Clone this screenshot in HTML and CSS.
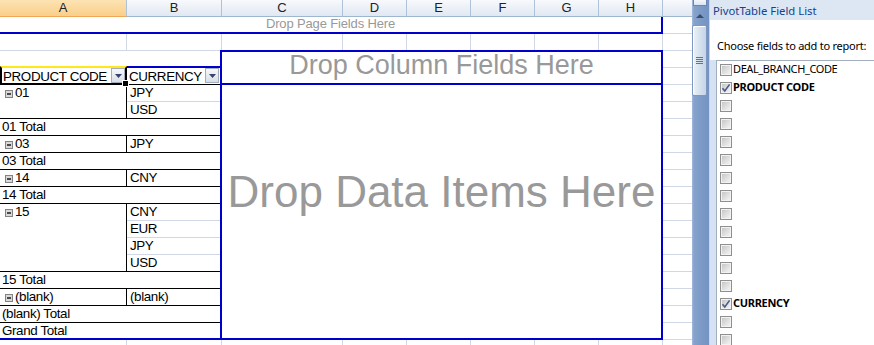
FILE: index.html
```html
<!DOCTYPE html>
<html>
<head>
<meta charset="utf-8">
<title>PivotTable</title>
<link rel="stylesheet" href="styles.css">
</head>
<body>
<div class="app">
  <div class="sheet">
    <div class="ch sel">A</div>
    <div class="ch">B</div>
    <div class="ch">C</div>
    <div class="ch">D</div>
    <div class="ch">E</div>
    <div class="ch">F</div>
    <div class="ch">G</div>
    <div class="ch">H</div>
    <div class="ch last"></div>

    <div class="pagefield">Drop Page Fields Here</div>
    <div class="blank3"></div>

    <div class="rh rh-a r5">
      <span class="rh-text">PRODUCT CODE</span>
      <span class="dd"><svg width="7" height="4" viewBox="0 0 7 4"><path d="M0 0H7L3.5 4Z" fill="#34446a"/></svg></span>
      <span class="handle"></span>
    </div>
    <div class="rh rh-b r5">
      <span class="rh-text">CURRENCY</span>
      <span class="dd"><svg width="7" height="4" viewBox="0 0 7 4"><path d="M0 0H7L3.5 4Z" fill="#34446a"/></svg></span>
    </div>

    <div class="grp r6-7"><span class="mi"></span><span>01</span></div>
    <div class="cur r6">JPY</div>
    <div class="cur end r7">USD</div>
    <div class="tot r8">01 Total</div>

    <div class="grp r9"><span class="mi"></span><span>03</span></div>
    <div class="cur end r9">JPY</div>
    <div class="tot r10">03 Total</div>

    <div class="grp r11"><span class="mi"></span><span>14</span></div>
    <div class="cur end r11">CNY</div>
    <div class="tot r12">14 Total</div>

    <div class="grp r13-16"><span class="mi"></span><span>15</span></div>
    <div class="cur r13">CNY</div>
    <div class="cur r14">EUR</div>
    <div class="cur r15">JPY</div>
    <div class="cur end r16">USD</div>
    <div class="tot r17">15 Total</div>

    <div class="grp r18"><span class="mi"></span><span>(blank)</span></div>
    <div class="cur end r18">(blank)</div>
    <div class="tot r19">(blank) Total</div>
    <div class="tot grand r20">Grand Total</div>

    <div class="colarea">Drop Column Fields Here</div>
    <div class="dataarea">Drop Data Items Here</div>
  </div>

  <div class="vscroll">
    <div class="split"></div>
    <div class="arrow"></div>
    <div class="thumb"><div class="grip"></div></div>
  </div>

  <div class="panel">
    <div class="ptitle">PivotTable Field List</div>
    <div class="choose">Choose fields to add to report:</div>
    <div class="listwrap">
      <div class="strip"></div>
      <div class="list">
        <div class="item"><span class="cb"></span><span class="lbl">DEAL_BRANCH_CODE</span></div>
        <div class="item"><span class="cb"><svg width="10" height="10" viewBox="0 0 10 10"><path d="M1.5 5.2L3.8 8L8.6 1.4" fill="none" stroke="#48598a" stroke-width="1.6"/></svg></span><span class="lbl b">PRODUCT CODE</span></div>
        <div class="item"><span class="cb"></span><span class="lbl"></span></div>
        <div class="item"><span class="cb"></span><span class="lbl"></span></div>
        <div class="item"><span class="cb"></span><span class="lbl"></span></div>
        <div class="item"><span class="cb"></span><span class="lbl"></span></div>
        <div class="item"><span class="cb"></span><span class="lbl"></span></div>
        <div class="item"><span class="cb"></span><span class="lbl"></span></div>
        <div class="item"><span class="cb"></span><span class="lbl"></span></div>
        <div class="item"><span class="cb"></span><span class="lbl"></span></div>
        <div class="item"><span class="cb"></span><span class="lbl"></span></div>
        <div class="item"><span class="cb"></span><span class="lbl"></span></div>
        <div class="item"><span class="cb"></span><span class="lbl"></span></div>
        <div class="item"><span class="cb"><svg width="10" height="10" viewBox="0 0 10 10"><path d="M1.5 5.2L3.8 8L8.6 1.4" fill="none" stroke="#48598a" stroke-width="1.6"/></svg></span><span class="lbl b">CURRENCY</span></div>
        <div class="item"><span class="cb"></span><span class="lbl"></span></div>
        <div class="item"><span class="cb"></span><span class="lbl"></span></div>
      </div>
    </div>
  </div>
</div>
</body>
</html>
```

FILE: styles.css
```css
* { box-sizing: border-box; }
html, body { margin: 0; padding: 0; }
body {
  width: 874px;
  height: 345px;
  overflow: hidden;
  background: #fff;
  font-family: "Liberation Sans", Arial, sans-serif;
}
.app {
  display: flex;
  width: 874px;
  height: 345px;
  overflow: hidden;
}

/* ---------- sheet ---------- */
.sheet {
  flex: none;
  width: 692px;
  height: 345px;
  display: grid;
  grid-template-columns: 127px 95px 121px 64px 64px 64px 64px 64px 29px;
  grid-template-rows: repeat(20, 17px) 5px;
  background-color: #fff;
  background-image:
    repeating-linear-gradient(to bottom, transparent 0 16px, #d0d7e5 16px 17px),
    linear-gradient(to right,
      transparent 0 126px, #d0d7e5 126px 127px,
      transparent 127px 221px, #d0d7e5 221px 222px,
      transparent 222px 342px, #d0d7e5 342px 343px,
      transparent 343px 406px, #d0d7e5 406px 407px,
      transparent 407px 470px, #d0d7e5 470px 471px,
      transparent 471px 534px, #d0d7e5 534px 535px,
      transparent 535px 598px, #d0d7e5 598px 599px,
      transparent 599px 662px, #d0d7e5 662px 663px,
      transparent 663px);
  font-size: 13.4px;
  line-height: 16px;
  letter-spacing: -0.38px;
  color: #000;
}

.ch {
  background: linear-gradient(to bottom, #f7f9fc, #e1e8f2);
  border-right: 1px solid #b0c2d8;
  border-bottom: 1px solid #9eb6ce;
  text-align: center;
  font-size: 13px;
  letter-spacing: 0;
  line-height: 16px;
  color: #222;
}
.ch.sel {
  background: linear-gradient(to bottom, #fde3b3, #f9cf89);
  border-bottom-color: #f0a755;
}
.ch.last { border-right: 0; }

.pagefield {
  grid-row: 2;
  grid-column: 1 / 9;
  background: #fff;
  border-right: 2px solid #0000cc;
  border-bottom: 2px solid #0000cc;
  text-align: center;
  color: #999;
  font-size: 13px;
  letter-spacing: -0.15px;
  line-height: 14px;
}
.blank3 {
  grid-row: 4;
  grid-column: 1 / 3;
  background: #fff;
}

.r5 { grid-row: 5; }
.r6 { grid-row: 6; }
.r7 { grid-row: 7; }
.r8 { grid-row: 8; }
.r9 { grid-row: 9; }
.r10 { grid-row: 10; }
.r11 { grid-row: 11; }
.r12 { grid-row: 12; }
.r13 { grid-row: 13; }
.r14 { grid-row: 14; }
.r15 { grid-row: 15; }
.r16 { grid-row: 16; }
.r17 { grid-row: 17; }
.r18 { grid-row: 18; }
.r19 { grid-row: 19; }
.r20 { grid-row: 20; }
.r6-7 { grid-row: 6 / 8; }
.r13-16 { grid-row: 13 / 17; }

.rh {
  display: flex;
  align-items: flex-start;
  margin-top: -2px;
  background: #fff;
}
.rh-text { padding-top: 1px; white-space: nowrap; }
.rh-a {
  grid-column: 1;
  position: relative;
  border-top: 2px solid #ffe81a;
  border-left: 2px solid #000;
  border-right: 2px solid #000;
  border-bottom: 2px solid #000;
  padding-left: 1px;
}
.rh-b {
  grid-column: 2;
  border-top: 2px solid #0000cc;
  border-bottom: 1px solid #000;
  padding: 0 3px 0 2px;
}
.dd {
  flex: none;
  margin-left: auto;
  width: 14px;
  height: 15px;
  border: 1px solid #a3adbd;
  background: linear-gradient(to bottom, #f6f7f9, #d9dfe8);
  display: flex;
  align-items: center;
  justify-content: center;
}
.dd svg { display: block; margin-top: 1px; }
.handle {
  position: absolute;
  right: -4px;
  bottom: -4px;
  width: 7px;
  height: 7px;
  background: #000;
  border: 1px solid #fff;
  z-index: 3;
}

.grp {
  grid-column: 1;
  background: #fff;
  border-right: 1px solid #000;
  border-bottom: 1px solid #000;
  display: flex;
  align-items: flex-start;
  padding-left: 5px;
  white-space: nowrap;
}
.mi {
  flex: none;
  position: relative;
  width: 8px;
  height: 8px;
  margin: 5px 2px 0 0;
  border: 1px solid #838383;
  background: #d9d9d9;
}
.mi::after {
  content: "";
  position: absolute;
  left: 1px;
  right: 1px;
  top: 2px;
  height: 2px;
  background: #4a4a4a;
}
.cur {
  grid-column: 2;
  padding-left: 3px;
}
.cur.end { border-bottom: 1px solid #000; }
.tot {
  grid-column: 1 / 3;
  background: #fff;
  border-bottom: 1px solid #000;
  padding-left: 2px;
  white-space: nowrap;
}
.tot.grand { border-bottom: 2px solid #0000cc; }

.colarea {
  grid-row: 4 / 6;
  grid-column: 3 / 9;
  margin: -1px 0 0 -2px;
  border: 2px solid #0000cc;
  background: #fff;
  text-align: center;
  color: #999;
  font-size: 27px;
  letter-spacing: 0;
  line-height: 26px;
  white-space: nowrap;
}
.dataarea {
  grid-row: 6 / 21;
  grid-column: 3 / 9;
  margin-left: -2px;
  border: 2px solid #0000cc;
  border-top: 0;
  background: #fff;
  padding-top: 83px;
  text-align: center;
  color: #999;
  font-size: 44px;
  letter-spacing: 0;
  line-height: 48px;
  white-space: nowrap;
}

/* ---------- scrollbar ---------- */
.vscroll {
  flex: none;
  width: 17px;
  height: 345px;
  background: linear-gradient(to right, #a4badb 0, #86a2cc 2px, #7b99c6 60%, #7593c2 100%);
  display: flex;
  flex-direction: column;
  align-items: flex-start;
}
.split {
  width: 14px;
  height: 6px;
  margin-left: 1px;
  border: 1px solid #6c86b0;
  border-top: 0;
  background: linear-gradient(to bottom, #f3f6fb, #dbe4f1);
}
.arrow {
  margin: 8px 0 0 4px;
  width: 0;
  height: 0;
  border-left: 4px solid transparent;
  border-right: 4px solid transparent;
  border-bottom: 4px solid #3b4e70;
}
.thumb {
  margin-top: 7px;
  width: 15px;
  height: 71px;
  border: 1px solid #7d98c2;
  border-radius: 2px;
  background: linear-gradient(to right, #eef2f8, #d9e3f0 45%, #c5d4e8);
  box-shadow: inset 1px 1px 0 #fff;
  display: flex;
  align-items: center;
  justify-content: center;
}
.grip {
  width: 7px;
  height: 7px;
  background: repeating-linear-gradient(to bottom, #5f7396 0 1px, transparent 1px 2px);
}

/* ---------- panel ---------- */
.panel {
  flex: 1;
  min-width: 0;
  height: 345px;
  display: flex;
  flex-direction: column;
  background: #fff;
  border-left: 1px solid #c6d6ec;
  font-family: "Noto Sans", "Open Sans", sans-serif;
  font-size: 11px;
  color: #000;
}
.ptitle {
  flex: none;
  height: 20px;
  background: #dde7f4;
  color: #15428b;
  padding: 1px 0 0 3px;
  font-size: 11.3px;
  line-height: 19px;
  white-space: nowrap;
}
.choose {
  flex: none;
  margin-top: 18px;
  padding-left: 7px;
  line-height: 15px;
  letter-spacing: -0.25px;
  white-space: nowrap;
}
.listwrap {
  flex: 1;
  display: flex;
  margin-top: 7px;
  min-height: 0;
}
.strip {
  flex: none;
  width: 6px;
  background: #d4e2f4;
}
.list {
  flex: 1;
  border-left: 1px solid #a3afbf;
  border-top: 1px solid #a3afbf;
  background: #fff;
  overflow: hidden;
}
.item {
  height: 18px;
  display: flex;
  align-items: flex-start;
  padding-left: 3px;
  white-space: nowrap;
}
.cb {
  flex: none;
  width: 12px;
  height: 12px;
  margin: 3px 1px 0 0;
  border: 1px solid #8e8f8f;
  background: linear-gradient(135deg, #c2c2c2 0%, #e8e8e8 70%, #f8f8f8 100%);
  box-shadow: inset 0 0 0 1px #f2f2f2;
  display: flex;
  align-items: center;
  justify-content: center;
}
.cb svg { display: block; }
.lbl {
  line-height: 15px;
  letter-spacing: -0.4px;
}
.lbl.b { font-weight: 700; letter-spacing: -0.3px; }
```
